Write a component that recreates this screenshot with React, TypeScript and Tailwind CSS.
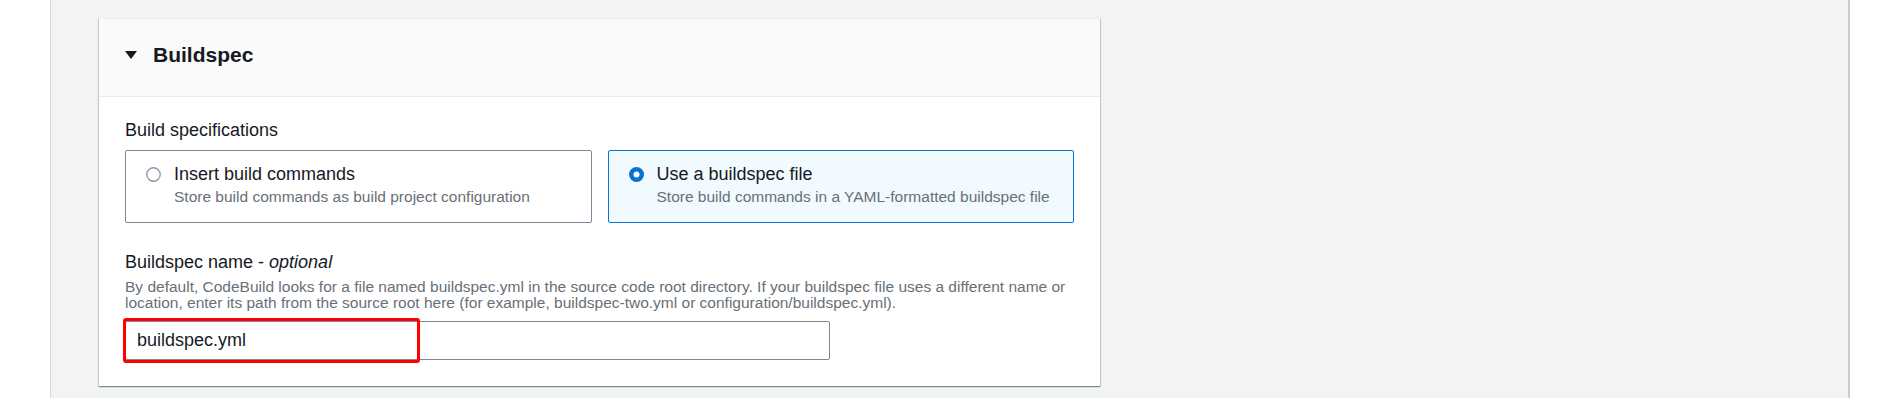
import React from "react";

const FONT = { fontFamily: '"Liberation Sans", Arial, sans-serif' };

function Caret() {
  return (
    <svg width="12" height="8" viewBox="0 0 12 8" className="shrink-0">
      <path d="M0 0 H12 L6 8 Z" fill="#16191f" />
    </svg>
  );
}

function Radio({ checked }: { checked: boolean }) {
  return (
    <svg width="15" height="15" viewBox="0 0 16 16" className="shrink-0">
      {checked ? (
        <>
          <circle cx="8" cy="8" r="8" fill="#0972d3" />
          <circle cx="8" cy="8" r="3.2" fill="#ffffff" />
        </>
      ) : (
        <circle cx="8" cy="8" r="7.2" fill="#ffffff" stroke="#8d99a8" strokeWidth="1.4" />
      )}
    </svg>
  );
}

function Tile({
  title,
  description,
  checked,
}: {
  title: string;
  description: string;
  checked: boolean;
}) {
  return (
    <div
      className={
        "flex h-[73px] flex-1 flex-col rounded-[2px] border pl-[20px] pt-[12px] " +
        (checked ? "border-[#0972d3] bg-[#f1faff]" : "border-[#7d8998] bg-white")
      }
    >
      <div className="flex items-center gap-[13px]">
        <Radio checked={checked} />
        <span className="text-[18px] leading-[22px] text-[#16191f]">{title}</span>
      </div>
      <p className="mt-[3px] pl-[28px] text-[15.5px] leading-[17px] text-[#687078]">
        {description}
      </p>
    </div>
  );
}

export default function App() {
  return (
    <div className="flex h-[398px] w-full bg-white" style={FONT}>
      <div className="w-[50px] shrink-0" />
      <div className="w-[1800px] shrink-0 border-l border-r-2 border-l-[#d5dbdb] border-r-[#c6cdd0] bg-[#f2f3f3] pl-[48px] pt-[18px]">
        <div className="w-[1001px] bg-white border-t border-[#eaeded] shadow-[0_1px_1px_0_rgba(0,28,36,0.3),1px_1px_1px_0_rgba(0,28,36,0.15),-1px_1px_1px_0_rgba(0,28,36,0.15)]">
          {/* Header */}
          <div className="flex items-center gap-[16px] border-b border-[#eaeded] bg-[#fafafa] pl-[26px] pb-[27px] pt-[22px]">
            <Caret />
            <h2 className="text-[21px] font-bold leading-[28px] text-[#16191f]">Buildspec</h2>
          </div>

          {/* Body */}
          <div className="px-[26px] pb-[26px] pt-[22px]">
            <div className="text-[18px] leading-[22px] text-[#16191f]">Build specifications</div>
            <div className="mt-[9px] flex gap-[16px]">
              <Tile
                title="Insert build commands"
                description="Store build commands as build project configuration"
                checked={false}
              />
              <Tile
                title="Use a buildspec file"
                description="Store build commands in a YAML-formatted buildspec file"
                checked={true}
              />
            </div>

            <div className="mt-[28px] text-[18px] leading-[22px] text-[#16191f]">
              Buildspec name - <i>optional</i>
            </div>
            <p className="mt-[5.5px] text-[15.5px] leading-[16.5px] text-[#687078]">
              By default, CodeBuild looks for a file named buildspec.yml in the source code root directory. If your
              buildspec file uses a different name or
              <br />
              location, enter its path from the source root here (for example, buildspec-two.yml or
              configuration/buildspec.yml).
            </p>

            <div className="relative mt-[9.5px] w-[705px]">
              <div className="flex h-[39px] items-center rounded-[2px] border border-[#7d8998] bg-white pl-[11px] text-[18px] text-[#16191f]">
                buildspec.yml
              </div>
              {/* annotation box */}
              <div className="absolute left-[-2px] top-[-3px] h-[45px] w-[297px] rounded-[3px] border-[3px] border-[#ff0000]" />
            </div>
          </div>
        </div>
      </div>
      <div className="flex-1" />
    </div>
  );
}
